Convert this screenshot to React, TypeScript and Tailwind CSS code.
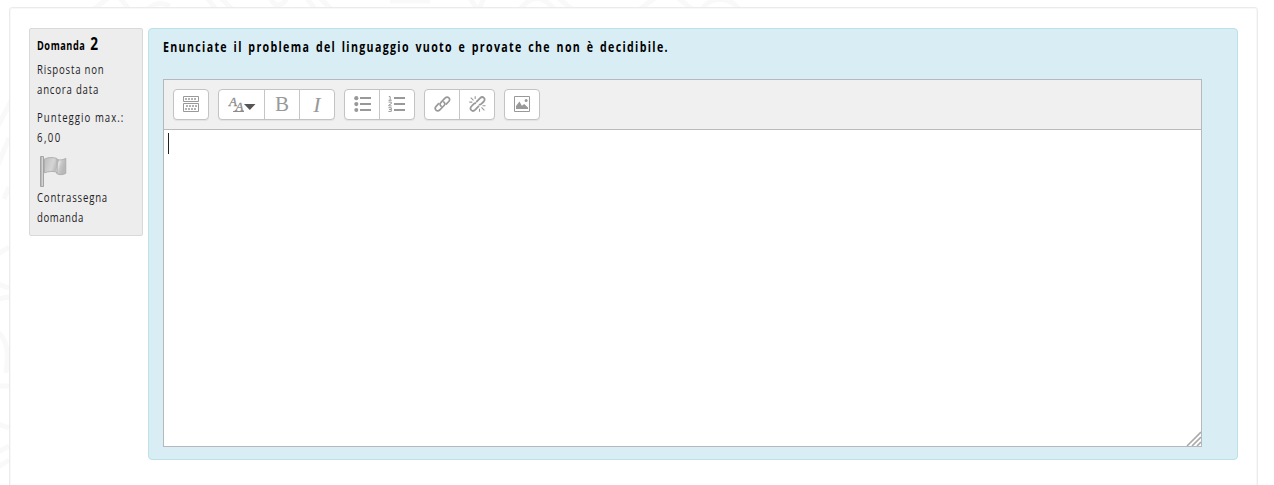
import type { ReactNode } from 'react';

function Group({ children }: { children: ReactNode }) {
  return (
    <div className="flex h-[31px] divide-x divide-[#c6c6c6] overflow-hidden rounded-[4px] border border-[#c3c3c3] bg-white shadow-[0_1px_1px_rgba(0,0,0,0.06)]">
      {children}
    </div>
  );
}

function Tool({ label, wide, children }: { label: string; wide?: boolean; children: ReactNode }) {
  return (
    <button aria-label={label} className={`flex shrink-0 items-center justify-center ${wide ? 'w-[46px]' : 'w-[35px] last:w-[34px]'}`}>
      {children}
    </button>
  );
}

function SideText({ children }: { children: ReactNode }) {
  return <div className="w-[130px] origin-left scale-x-[0.8]">{children}</div>;
}

function ToggleIcon() {
  return (
    <svg width="16" height="16" viewBox="0 0 16 16" fill="none" stroke="#999" className="mb-px">
      <path d="M.5.5h15v5H.5zM.5 7.5h15v8H.5z" />
      <path d="M2 3h12" strokeWidth="1.4" strokeDasharray="2 1" />
      <path d="M3 10h11M2 13h2m1 0h5m1 0h2" strokeWidth="1.6" strokeDasharray="2 1" />
    </svg>
  );
}

function StyleIcon() {
  return (
    <svg width="28" height="18" viewBox="0 0 28 18" fill="#8c8c8c" className="ml-px overflow-visible">
      <text x="1" y="10" fontFamily="Liberation Serif, serif" fontStyle="italic" fontSize="13" stroke="#8c8c8c" strokeWidth=".3">A</text>
      <text x="7.5" y="14.5" fontFamily="Liberation Serif, serif" fontStyle="italic" fontSize="13" stroke="#8c8c8c" strokeWidth=".3">A</text>
      <path d="M5 15h11v1H5z" />
      <path d="M16 8h11.5l-5.7 6z" fill="#555" />
    </svg>
  );
}

function BulletIcon() {
  return (
    <svg width="17" height="16" viewBox="0 0 17 16" fill="#999" className="mb-px">
      <circle cx="2.3" cy="2.2" r="2.1" />
      <circle cx="2.3" cy="8.1" r="2.1" />
      <circle cx="2.3" cy="14" r="2" />
      <path d="M6 1h11v2H6zM6 7h11v2H6zM6 13h11v2H6z" />
    </svg>
  );
}

function NumberIcon() {
  return (
    <svg width="17" height="16" viewBox="0 0 17 16" fill="none" stroke="#999" className="mr-px mb-px">
      <path d="M.8.6h1.4V4M.5 4.3h3.2M.5 6.1h2.8v1.6L.8 9v.9h2.9M.4 11.7h2.9v3.7H.4m.7-1.9h2" />
      <path d="M6 2h11M6 8h11M6 14h11" strokeWidth="2" />
    </svg>
  );
}

function LinkIcon() {
  return (
    <svg width="17" height="16" viewBox="0 0 17 16" fill="none" stroke="#999" strokeWidth="1.7" strokeLinecap="round" className="mb-px">
      <path d="m7.1 10.1-.3-.3c-1-1-1-2.1 0-3.1l4.2-4.5c2.7-2.7 6.3.7 3.8 3.3L12.2 8.2" />
      <path d="m9.7 6 .4.4c1 1 1 2.1 0 3.1l-4.3 4.3c-2.6 2.6-6.2-.8-3.7-3.5l2.5-2.6" />
    </svg>
  );
}

function UnlinkIcon() {
  return (
    <svg width="17" height="16" viewBox="0 0 17 16" fill="none" stroke="#999" strokeWidth="1.8" className="mb-px">
      <path d="m7.2 6.2 3.9-4.1c2.7-2.6 6.2.8 3.7 3.4l-2.5 2.4c-.8.8-1.7 1-2.5.5" />
      <path d="m9.9 9.9-3.8 4c-2.7 2.6-6.3-.8-3.8-3.4l2.5-2.6c.8-.7 1.6-.9 2.4-.5" />
      <path d="m1.7 1.6 2.8 2.7M6.2.3v2.8M.3 6.1h3M10.5 12.7v3M12.5 11.4l2.9 2.9M13.5 9.8h3" strokeWidth="1.1" />
    </svg>
  );
}

function ImageIcon() {
  return (
    <svg width="16" height="16" viewBox="0 0 16 16" className="mb-px">
      <path d="M.5.5h15v15H.5z" fill="none" stroke="#999" />
      <path d="M2 13V10L5.4 5.5l2.5 4.3L10.2 8 14 11.4V13z" fill="#999" />
      <circle cx="12.1" cy="4.5" r="1.5" fill="#999" />
    </svg>
  );
}

function FlagIcon() {
  return (
    <svg width="32" height="34" viewBox="0 0 32 34" className="block">
      <defs>
        <linearGradient id="cloth" x1="0" x2="1" y1="0" y2=".25">
          <stop offset="0" stopColor="#bdbdbd" />
          <stop offset=".45" stopColor="#d5d5d5" />
          <stop offset=".66" stopColor="#bababa" />
          <stop offset=".7" stopColor="#e4e4e4" />
          <stop offset=".85" stopColor="#c4c4c4" />
          <stop offset="1" stopColor="#b8b8b8" />
        </linearGradient>
      </defs>
      <path d="M7.5 4c4-1.8 8-1.8 12-.7l.8 1.2c3 .9 6 .4 8.5-1.2v15c-2.5 1.6-6 1.8-9 .4l-.4-1.7c-4-1-8-.6-11.9.8z" fill="url(#cloth)" stroke="#aaa" strokeWidth=".9" />
      <path d="M19.6 3.5v13.3M20.5 5v13.3" stroke="#b3b3b3" strokeWidth=".7" />
      <path d="M3.5 1.5h3v30h-3z" fill="#bcbcbc" stroke="#a4a4a4" />
      <path d="M5.5 2v29" stroke="#d4d4d4" />
    </svg>
  );
}

export default function App() {
  return (
    <div className="relative h-[485px] w-full overflow-hidden bg-white px-[9px] pt-[7px] font-['Open_Sans',sans-serif] text-[#1d2125]">
      <svg className="pointer-events-none absolute inset-0" width="1274" height="485" fill="none" stroke="#f9f9f9" strokeWidth="5">
        <path d="M94 9 108-2M120-2l8 10M148 9c6-6 14-7 22-3M207-2l9 11M221-2l11 11M270-4c3 12 13 12 18 0M305-4l10 13M319-3l12 12M390 1h40M470-2l7 11M484-2l-5 11M520 9c12-14 22-14 34 0M558-2l14 11M640 9 655-2M678-2l14 11M702 9c9-13 28-12 37 0" />
        <path d="M-2 126 11 101M-2 165l11-27M4 199l5-12M-2 254l11-7M-2 284l11 4M-2 299l11-2M-2 332c9 8 11 20 8 41M-2 386h12M-2 424l11 4M-2 452l11-6M-2 467l11-7" />
      </svg>
      <main className="relative flex h-[500px] w-[1249px] items-start rounded-[3px] border border-[#ebebeb] bg-white pt-[20px] pl-[19px] shadow-[inset_0_0_0_1px_#f8f8f8]">
        <aside className="h-[208px] w-[114px] shrink-0 rounded-[2px] border border-[#d8dada] bg-[#ededed] px-[7px] pt-[5px] text-[12px] leading-5 font-medium tracking-[1px] whitespace-nowrap">
          <h3 className="flex h-[26px] w-[120px] origin-left scale-x-[0.8] items-baseline gap-[6px] leading-[20px] font-bold tracking-[0.7px] text-black">
            <span className="text-[11.5px]">Domanda</span>
            <span className="text-[17px]">2</span>
          </h3>
          <SideText>Risposta non</SideText>
          <SideText>ancora data</SideText>
          <div className="mt-2 tracking-[1.3px]"><SideText>Punteggio max.:</SideText></div>
          <div className="tracking-[1.8px]"><SideText>6,00</SideText></div>
          <div className="h-[40px] pt-[7px]"><FlagIcon /></div>
          <SideText>Contrassegna</SideText>
          <div className="tracking-[0.7px]"><SideText>domanda</SideText></div>
        </aside>
        <section className="ml-[5px] h-[432px] w-[1090px] shrink-0 rounded-[4px] border border-[#bce1e8] bg-[#d9edf5] pt-[7px] pl-[14px]">
          <p className="h-[43px] w-[800px] origin-left scale-x-[0.76] text-[14px] leading-[22px] font-bold tracking-[1.75px] [word-spacing:2px] whitespace-nowrap text-black">
            Enunciate il problema del linguaggio vuoto e provate che non è decidibile.
          </p>
          <div className="flex h-[368px] w-[1039px] flex-col border border-[#b5b9bc] bg-white">
            <div className="flex h-[50px] shrink-0 gap-[9px] border-b border-[#bbb] bg-[#f0f0f0] pt-[9px] pl-[9px]">
              <Group><Tool label="Mostra altri pulsanti"><ToggleIcon /></Tool></Group>
              <Group>
                <Tool label="Stili paragrafo" wide><StyleIcon /></Tool>
                <Tool label="Grassetto"><span className="font-['Liberation_Serif',serif] text-[21px] leading-none text-[#999]">B</span></Tool>
                <Tool label="Corsivo"><span className="font-['Liberation_Serif',serif] text-[22px] leading-none text-[#999] italic">I</span></Tool>
              </Group>
              <Group>
                <Tool label="Elenco puntato"><BulletIcon /></Tool>
                <Tool label="Elenco numerato"><NumberIcon /></Tool>
              </Group>
              <Group>
                <Tool label="Link"><LinkIcon /></Tool>
                <Tool label="Rimuovi link"><UnlinkIcon /></Tool>
              </Group>
              <Group><Tool label="Immagine"><ImageIcon /></Tool></Group>
            </div>
            <div className="flex flex-1 flex-col items-start justify-between pt-[3px] pl-[4px]">
              <div className="h-[21px] w-px bg-[#222]" />
              <svg width="15" height="15" className="self-end" viewBox="0 0 15 15" stroke="#aaa" strokeWidth="1.6">
                <path d="M1 15 15 1M6 15l9-9M11 15l4-4" />
              </svg>
            </div>
          </div>
        </section>
      </main>
    </div>
  );
}
